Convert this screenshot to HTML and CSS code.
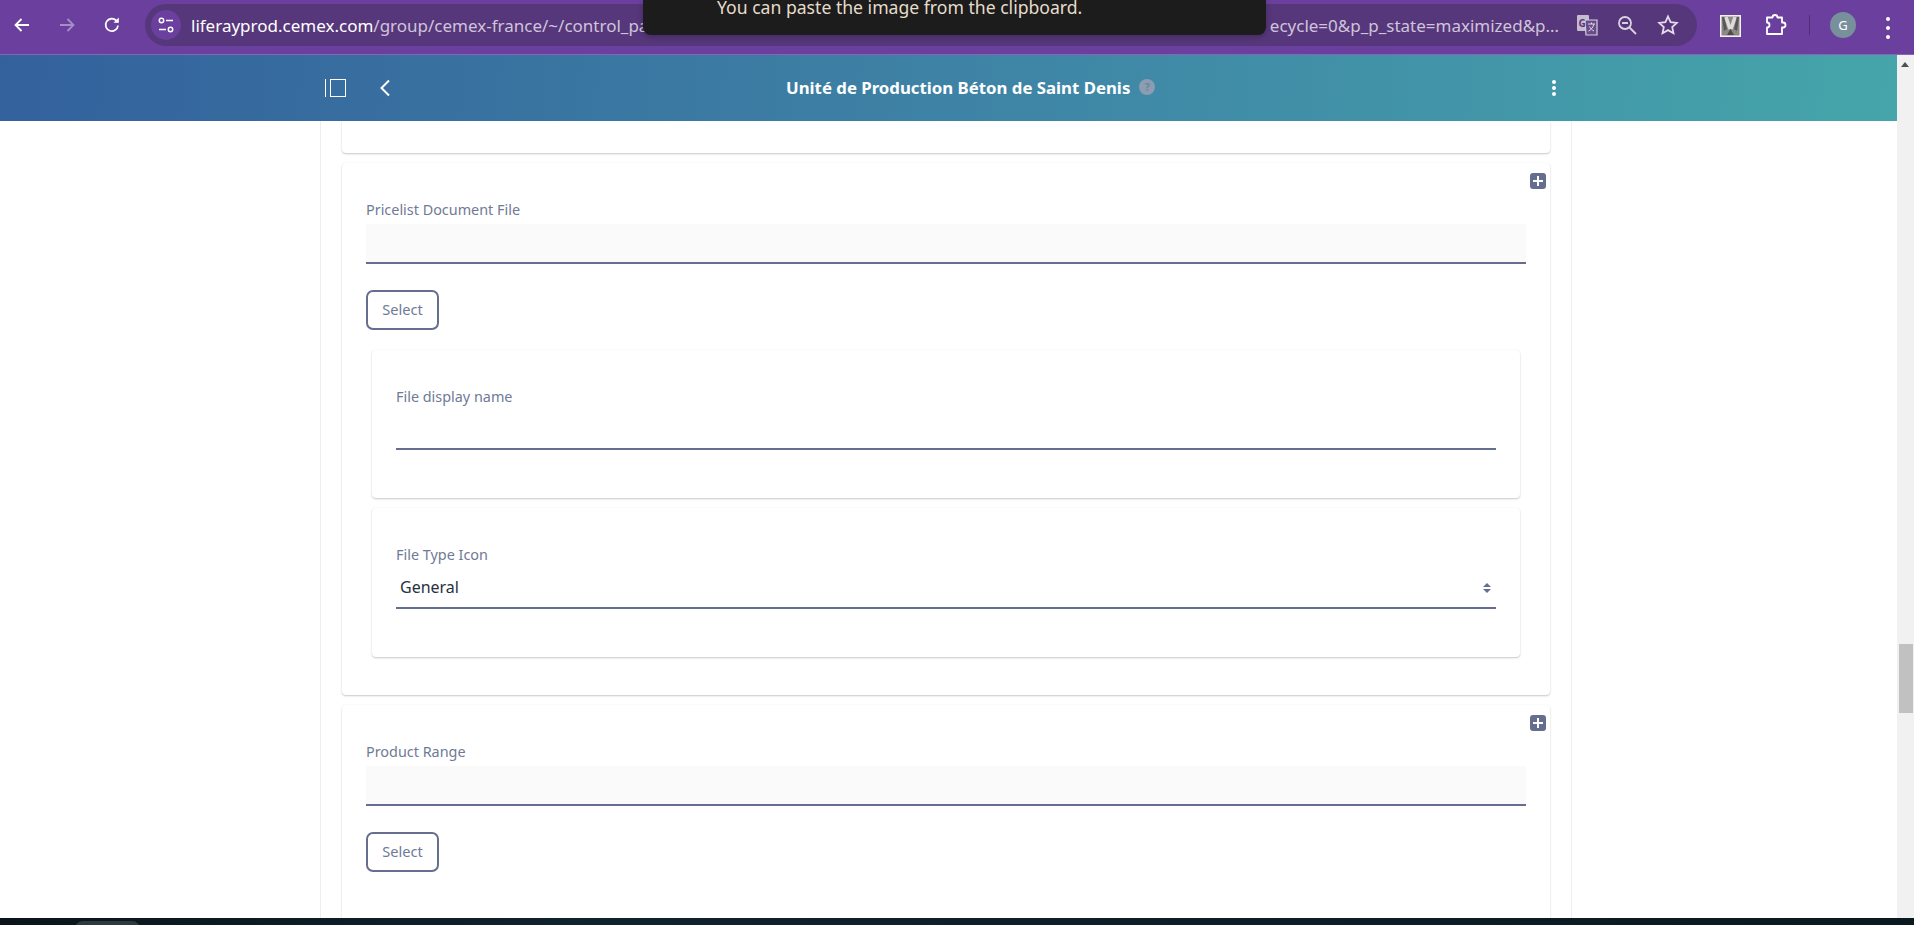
FILE: index.html
```html
<!DOCTYPE html>
<html lang="en">
  <head>
    <meta charset="UTF-8" />
    <meta name="viewport" content="width=device-width, initial-scale=1.0" />
    <title>Unité de Production Béton de Saint Denis</title>
    <link rel="stylesheet" href="styles.css">
  </head>
  <body>
    <div class="toast">You can paste the image from the clipboard.</div>

    <div class="browser-bar">
      <svg class="nav-icon nav-back" width="20" height="20" viewBox="0 0 20 20"><path d="M17 10H4M9.5 4 3.5 10l6 6" fill="none" stroke="#fff" stroke-width="1.8"/></svg>
      <svg class="nav-icon nav-forward" width="20" height="20" viewBox="0 0 20 20"><path d="M3 10h13M10.5 4l6 6-6 6" fill="none" stroke="#a78cc6" stroke-width="1.8"/></svg>
      <svg class="nav-icon nav-reload" width="20" height="20" viewBox="0 0 20 20"><path d="M16 10.5a6.2 6.2 0 1 1-1.800-5l1.600 1.600" fill="none" stroke="#fff" stroke-width="1.8"/><path d="M16.800 2.500v5.300h-5.300z" fill="#fff"/></svg>
      <div class="omnibox">
        <span class="site-chip">
          <svg width="18" height="18" viewBox="0 0 18 18"><g fill="none" stroke="#fff" stroke-width="1.5"><circle cx="4.500" cy="4.500" r="2.200"/><circle cx="13.500" cy="13.500" r="2.200"/><path d="M9 4.500h7M2 13.500h7"/></g></svg>
        </span>
        <span class="url"><span class="url-host">liferayprod.cemex.com</span>/group/cemex-france/~/control_panel</span>
        <span class="url-end">ecycle=0&amp;p_p_state=maximized&amp;p…</span>
        <svg class="omni-translate" width="22" height="22" viewBox="0 0 22 22"><rect x="1" y="1" width="12" height="16" rx="1" fill="#c6bccf"/><path d="M9 6h12v15H10z" fill="#6a4c8c" stroke="#d6cfdd" stroke-width="1.2"/><text x="2.500" y="12.500" class="translate-g">G</text><path d="M12 10h7M15.500 8.500V10M18 10c-1 3.500-3 6-5.500 7M13.500 12.500c1 2 2.500 3.500 4.500 4.500" fill="none" stroke="#e0dbe6"/></svg>
        <svg class="omni-zoom" width="22" height="22" viewBox="0 0 22 22"><g fill="none" stroke="#d9d2e2" stroke-width="1.8"><circle cx="9" cy="9" r="6"/><path d="M13.500 13.500 20 20M6 9h6"/></g></svg>
        <svg class="omni-star" width="22" height="22" viewBox="0 0 22 22"><path d="m11 2.500 2.600 5.700 6.200.7-4.600 4.200 1.300 6.100L11 16.100l-5.500 3.100 1.300-6.100-4.600-4.200 6.200-.7z" fill="none" stroke="#e3dcea" stroke-width="1.8"/></svg>
      </div>
      <svg class="ext-thumb" width="21" height="22" viewBox="0 0 21 22"><rect width="21" height="22" fill="#f1f1f1"/><rect x="1.500" y="1.500" width="18" height="19" fill="#8c8885"/><path d="M6 2l4 12M15 2l-4 12" fill="none" stroke="#dcdcdc" stroke-width="3.500"/><path d="M2 2h2l3 12-3 2zM19 2h-2l-3 12 3 2z" fill="#5a5654"/><path d="M7 20l3.500-6 3.500 6z" fill="#4e4a48"/></svg>
      <svg class="ext-puzzle" width="22" height="22" viewBox="0 0 22 22"><path d="M2 3.500H7.500a2.500 2.500 0 0 1 5 0H17V8.500h1a2.500 2.500 0 0 1 0 5h-1V20H2v-6.500a2.500 2.500 0 0 0 0-5z" fill="none" stroke="#fff" stroke-width="1.8" stroke-linejoin="round"/></svg>
      <span class="bar-sep"></span>
      <span class="avatar">G</span>
      <span class="bar-menu"><i></i><i></i><i></i></span>
    </div>

    <div class="app-row">
      <div class="page">
        <header class="app-header">
          <svg class="panel-icon" width="21" height="18" viewBox="0 0 21 18"><path d="M.5 0v18" stroke="#fff"/><rect x="5.500" y=".5" width="15" height="17" fill="none" stroke="#fff"/></svg>
          <svg class="back-icon" width="12" height="18" viewBox="0 0 12 18"><path d="M10 1.500 2.500 9l7.500 7.500" fill="none" stroke="#fff" stroke-width="2"/></svg>
          <h1 class="app-title">Unité de Production Béton de Saint Denis <span class="help-dot">?</span></h1>
          <span class="header-menu"><i></i><i></i><i></i></span>
        </header>

        <main class="scroller">
          <div class="sheet">
            <div class="card card-stub"></div>

            <section class="card">
              <div class="card-tools"><span class="plus-btn"></span></div>
              <label class="field-label">Pricelist Document File</label>
              <input class="field-input filled" type="text" />
              <button class="select-btn" type="button">Select</button>

              <div class="card inner-card">
                <label class="field-label">File display name</label>
                <input class="field-input plain" type="text" />
              </div>

              <div class="card inner-card inner-card-last">
                <label class="field-label">File Type Icon</label>
                <div class="select-wrap">
                  <select class="field-select">
                    <option>General</option>
                  </select>
                  <span class="select-arrows"></span>
                </div>
              </div>
            </section>

            <section class="card card-open">
              <div class="card-tools"><span class="plus-btn"></span></div>
              <label class="field-label">Product Range</label>
              <input class="field-input filled" type="text" />
              <button class="select-btn" type="button">Select</button>
            </section>
          </div>
        </main>
      </div>

      <div class="scrollbar">
        <span class="scroll-up"></span>
        <span class="scroll-thumb"></span>
      </div>
    </div>

    <div class="taskbar"><span class="task-tab"></span></div>
  </body>
</html>
```

FILE: styles.css
```css
* {
  box-sizing: border-box;
}
html,
body {
  height: 100%;
}
body {
  position: relative;
  display: flex;
  flex-direction: column;
  height: 925px;
  margin: 0;
  overflow: hidden;
  background: #fff;
  font-family: "Noto Sans", Arial, sans-serif;
}

/* browser chrome */
.browser-bar {
  flex: 0 0 55px;
  display: flex;
  align-items: flex-start;
  padding-top: 4px;
  background: #6b3f9e;
  border-bottom: 1px solid #8a64b4;
}
.nav-icon {
  flex: none;
  margin-top: 11px;
}
.nav-back {
  margin-left: 12px;
}
.nav-forward {
  margin-left: 25px;
}
.nav-reload {
  margin-left: 25px;
}
.omnibox {
  display: flex;
  align-items: center;
  width: 1552px;
  height: 42px;
  margin-left: 23px;
  padding-left: 6px;
  border-radius: 21px;
  background: #57377b;
  color: #cfc4dc;
  font-family: "Noto Sans", sans-serif;
  font-size: 17px;
}
.site-chip {
  flex: none;
  display: flex;
  align-items: center;
  justify-content: center;
  width: 30px;
  height: 30px;
  border-radius: 50%;
  background: #6b3f9e;
}
.url {
  flex: 1;
  min-width: 0;
  margin-left: 10px;
  padding-top: 1px;
  overflow: hidden;
  white-space: nowrap;
}
.url-host {
  color: #fff;
}
.url-end {
  flex: none;
  padding-top: 1px;
  white-space: nowrap;
}
.omni-translate {
  flex: none;
  margin-left: 17px;
}
.translate-g {
  fill: #57377b;
  font-family: "Noto Sans", sans-serif;
  font-size: 10px;
  font-weight: 700;
}
.omni-zoom {
  flex: none;
  margin-left: 18px;
}
.omni-star {
  flex: none;
  margin: 0 18px 0 19px;
}
.ext-thumb {
  flex: none;
  margin: 11px 0 0 23px;
  filter: blur(0.5px);
}
.ext-puzzle {
  flex: none;
  margin: 10px 0 0 24px;
}
.bar-sep {
  flex: none;
  width: 1px;
  height: 20px;
  margin: 11px 0 0 22px;
  background: #4f2d78;
}
.avatar {
  flex: none;
  display: flex;
  align-items: center;
  justify-content: center;
  width: 26px;
  height: 26px;
  margin: 8px 0 0 20px;
  border-radius: 50%;
  background: #78909c;
  color: #fff;
  font-size: 13px;
}
.bar-menu {
  flex: none;
  display: flex;
  flex-direction: column;
  gap: 5px;
  margin: 13px 0 0 30px;
}
.bar-menu i {
  width: 4px;
  height: 4px;
  border-radius: 50%;
  background: #fff;
}

/* toast over the browser bar */
.toast {
  position: absolute;
  top: 0;
  left: 643px;
  z-index: 5;
  width: 623px;
  height: 35px;
  padding-left: 74px;
  border-radius: 0 0 8px 8px;
  background: #1c1c1c;
  box-shadow: 0 2px 6px rgba(0, 0, 0, 0.25);
  color: #e6dccb;
  font-size: 17.6px;
  line-height: 15px;
}

/* app */
.app-row {
  flex: 1;
  display: flex;
  min-height: 0;
}
.page {
  flex: 1;
  display: flex;
  flex-direction: column;
  min-width: 0;
}
.app-header {
  position: relative;
  flex: 0 0 66px;
  display: flex;
  align-items: center;
  padding-left: 325px;
  background: linear-gradient(95deg, #33619c 0%, #3f86a6 55%, #45a5aa 100%);
  color: #fff;
}
.panel-icon {
  flex: none;
}
.back-icon {
  flex: none;
  margin-left: 33px;
}
.app-title {
  flex: none;
  display: flex;
  align-items: center;
  gap: 9px;
  margin: 0 0 2px 395px;
  font-size: 16.8px;
  font-weight: 700;
  white-space: nowrap;
}
.help-dot {
  display: flex;
  align-items: center;
  justify-content: center;
  width: 16px;
  height: 16px;
  border-radius: 50%;
  background: #8a9db2;
  color: #6f8398;
  font-size: 10px;
}
.header-menu {
  flex: none;
  display: flex;
  flex-direction: column;
  gap: 2px;
  margin-left: 397px;
}
.header-menu i {
  width: 4px;
  height: 4px;
  border-radius: 50%;
  background: #fff;
}

.scroller {
  flex: 1;
  min-height: 0;
  overflow: hidden;
}
.sheet {
  width: 1252px;
  height: 100%;
  margin-left: 320px;
  padding: 0 21px;
  border-left: 1px solid #eee;
  border-right: 1px solid #eee;
}

.card {
  margin-bottom: 10px;
  padding: 10px 24px 38px;
  border-radius: 4px;
  background: #fff;
  box-shadow: 0 1px 2px rgba(0, 0, 0, 0.22), 0 0 1px rgba(0, 0, 0, 0.06);
}
.card-stub {
  height: 32px;
  padding: 0;
  border-radius: 0 0 4px 4px;
}
.card-open {
  min-height: 240px;
}
.card-tools {
  display: flex;
  justify-content: flex-end;
  height: 16px;
  margin: 0 -20px 11px 0;
}
.plus-btn {
  position: relative;
  width: 16px;
  height: 16px;
  border-radius: 3px;
  background: #666e8f;
}
.plus-btn::before,
.plus-btn::after {
  content: "";
  position: absolute;
  background: #fff;
}
.plus-btn::before {
  left: 3px;
  top: 7px;
  width: 10px;
  height: 2px;
}
.plus-btn::after {
  left: 7px;
  top: 3px;
  width: 2px;
  height: 10px;
}

.field-label {
  display: block;
  height: 20px;
  color: #707a96;
  font-size: 14.4px;
  line-height: 20px;
}
.field-input {
  display: block;
  width: 100%;
  border: 0;
  border-bottom: 2px solid #666e8f;
  border-radius: 0;
  outline: none;
}
.filled {
  height: 40px;
  margin-top: 4px;
  background: #fafafa;
}
.plain {
  height: 43px;
  background: transparent;
}
.select-btn {
  display: block;
  width: 73px;
  height: 40px;
  margin-top: 26px;
  padding: 0 0 2px;
  border: 2px solid #666e8f;
  border-radius: 7px;
  background: #fff;
  color: #707a96;
  font-family: "Noto Sans", sans-serif;
  font-size: 14.6px;
}
.inner-card {
  height: 148px;
  margin: 20px 6px 0;
  padding: 37px 24px 0;
}
.inner-card-last {
  height: 149px;
  margin: 10px 6px 0;
}
.select-wrap {
  position: relative;
}
.field-select {
  display: block;
  width: 100%;
  height: 44px;
  padding: 2px 0 0 4px;
  border: 0;
  border-bottom: 2px solid #666e8f;
  border-radius: 0;
  background: #fff;
  appearance: none;
  color: #28303f;
  font-family: "Noto Sans", sans-serif;
  font-size: 16px;
}
.select-arrows {
  position: absolute;
  right: 5px;
  top: 18px;
  width: 8px;
  height: 10px;
}
.select-arrows::before,
.select-arrows::after {
  content: "";
  position: absolute;
  left: 0;
  border-left: 4px solid transparent;
  border-right: 4px solid transparent;
}
.select-arrows::before {
  top: 0;
  border-bottom: 4px solid #666e8f;
}
.select-arrows::after {
  bottom: 0;
  border-top: 4px solid #666e8f;
}

/* page scrollbar */
.scrollbar {
  position: relative;
  flex: 0 0 17px;
  background: #f1f1f1;
}
.scroll-up {
  position: absolute;
  left: 4px;
  top: 7px;
  border-left: 4px solid transparent;
  border-right: 4px solid transparent;
  border-bottom: 5px solid #505050;
}
.scroll-thumb {
  position: absolute;
  left: 2px;
  top: 589px;
  width: 14px;
  height: 69px;
  background: #c1c1c1;
}

.taskbar {
  position: relative;
  flex: 0 0 7px;
  overflow: hidden;
  background: linear-gradient(90deg, #0b141b, #10222c 30%, #0c1820);
}
.task-tab {
  position: absolute;
  left: 75px;
  top: 3px;
  width: 65px;
  height: 20px;
  border-radius: 8px 8px 0 0;
  background: #2e3a3e;
}
```
